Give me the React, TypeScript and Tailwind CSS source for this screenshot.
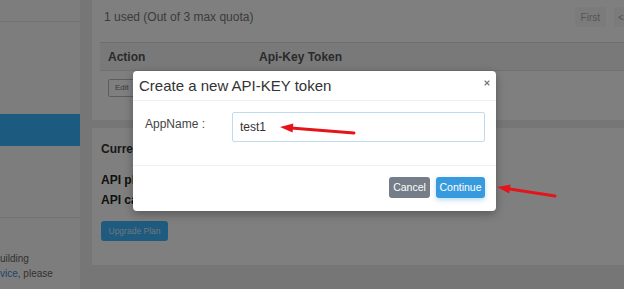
import { X } from 'lucide-react';

function Arrow({ x1, y1, x2, y2 }: { x1: number; y1: number; x2: number; y2: number }) {
  // tail at (x1,y1), tip at (x2,y2)
  const dx = x2 - x1;
  const dy = y2 - y1;
  const len = Math.sqrt(dx * dx + dy * dy);
  const ux = dx / len;
  const uy = dy / len;
  const bx = x2 - ux * 13;
  const by = y2 - uy * 13;
  const px = -uy * 4.5;
  const py = ux * 4.5;
  return (
    <g>
      <line x1={x1} y1={y1} x2={bx + ux * 2} y2={by + uy * 2} stroke="#e5141b" strokeWidth={3} strokeLinecap="round" />
      <polygon points={`${x2},${y2} ${bx + px},${by + py} ${bx - px},${by - py}`} fill="#e5141b" />
    </g>
  );
}

export default function App() {
  return (
    <div
      className="relative w-[624px] h-[289px] overflow-hidden flex bg-[#ececec] text-[#333]"
      style={{ fontFamily: '"Liberation Sans", Arial, sans-serif' }}
    >
      {/* Sidebar */}
      <div className="w-[80px] shrink-0 bg-[#fafafa] flex flex-col">
        <div className="h-[22px] shrink-0 border-b border-[#e4e4e4]" />
        <div className="h-[92px] shrink-0" />
        <div className="h-[32px] shrink-0 bg-[#38b4ff]" />
        <div className="h-[71px] shrink-0" />
        <div className="shrink-0 border-t border-[#e6e6e6] pt-[33px] text-[10px] leading-[15px] text-[#666] whitespace-nowrap">
          <p>uilding</p>
          <p>
            <span className="text-[#3a8ad4]">vice</span>, please
          </p>
        </div>
      </div>

      {/* Main */}
      <div className="flex-1 pl-[12px] flex flex-col gap-[8px]">
        <div className="bg-white h-[120px] shrink-0 pl-[8px] flex flex-col">
          <div className="flex items-center justify-between h-[34px]">
            <p className="pl-[4px] text-[12px] text-[#777]">1 used (Out of 3 max quota)</p>
            <div className="flex gap-[8px] -mr-[14px]">
              <span className="h-[20px] px-[6px] rounded-[3px] bg-[#f7f7f7] text-[10px] text-[#aaa] flex items-center">First</span>
              <span className="h-[20px] w-[24px] rounded-[3px] bg-[#f7f7f7] text-[10px] text-[#aaa] flex items-center px-[4px]">&lt;</span>
            </div>
          </div>
          <div className="mt-[8px] border-t border-[#dcdcdc]">
            <div className="h-[28px] bg-[#f3f3f3] border-b border-[#e2e2e2] flex items-center text-[12px] font-bold text-[#555]">
              <span className="pl-[8px] w-[159px]">Action</span>
              <span>Api-Key Token</span>
            </div>
            <div className="pt-[8px] pl-[8px] flex">
              <span className="flex items-center h-[18px] px-[6px] border border-[#bbb] rounded-[2px] text-[8px] text-[#777]">Edit</span>
            </div>
          </div>
        </div>
        <div className="bg-white h-[137px] shrink-0 pl-[9px] pt-[12px] flex flex-col items-start">
          <p className="text-[12px] font-bold text-[#333] h-[33px]">Current Plan</p>
          <p className="text-[12px] font-bold text-[#222] h-[20px] leading-[14px]">API plan</p>
          <p className="text-[12px] font-bold text-[#222] h-[22px] leading-[14px]">API calls</p>
          <button className="mt-[6px] h-[20px] w-[67px] rounded-[3px] bg-[#3fb4ff] text-[8.5px] text-[#d6ebff]">Upgrade Plan</button>
        </div>
      </div>

      {/* Overlay */}
      <div className="absolute inset-0 bg-black/50" />

      {/* Modal */}
      <div className="absolute left-[133px] top-[71px] w-[363px] h-[140px] bg-white rounded-[4px] shadow-[0_3px_10px_rgba(0,0,0,0.3)] flex flex-col">
        <div className="h-[30px] border-b border-[#eceff2] flex items-center justify-between pl-[6px] pr-[5px]">
          <h3 className="text-[15px] text-[#333] leading-none">Create a new API-KEY token</h3>
          <X className="w-[8px] h-[8px] text-[#777] -mt-[5px]" strokeWidth={3.5} />
        </div>
        <div className="h-[65px] border-b border-[#eef1f4] flex pl-[12px] pr-[11px] pt-[11px]">
          <label className="w-[87px] text-[12px] text-[#444] pt-[3px]">AppName :</label>
          <div className="flex-1 h-[30px] border border-[#bfdbf0] rounded-[2px] flex items-center pl-[7px] text-[12px] text-[#333]">
            test1
          </div>
        </div>
        <div className="flex-1 flex items-center justify-end gap-[6px] pr-[11px] pb-[2px]">
          <button className="h-[21px] w-[41px] rounded-[3px] bg-[#747d88] text-[10.5px] text-white">Cancel</button>
          <button className="h-[21px] w-[49px] rounded-[3px] bg-[#389ade] text-[10.5px] text-white shadow-[0_2px_5px_rgba(56,154,222,0.35)]">Continue</button>
        </div>
      </div>

      {/* Annotations */}
      <svg className="absolute inset-0" width={624} height={289} viewBox="0 0 624 289">
        <Arrow x1={354} y1={133} x2={280} y2={127} />
        <Arrow x1={555} y1={196} x2={497} y2={187} />
      </svg>
    </div>
  );
}
